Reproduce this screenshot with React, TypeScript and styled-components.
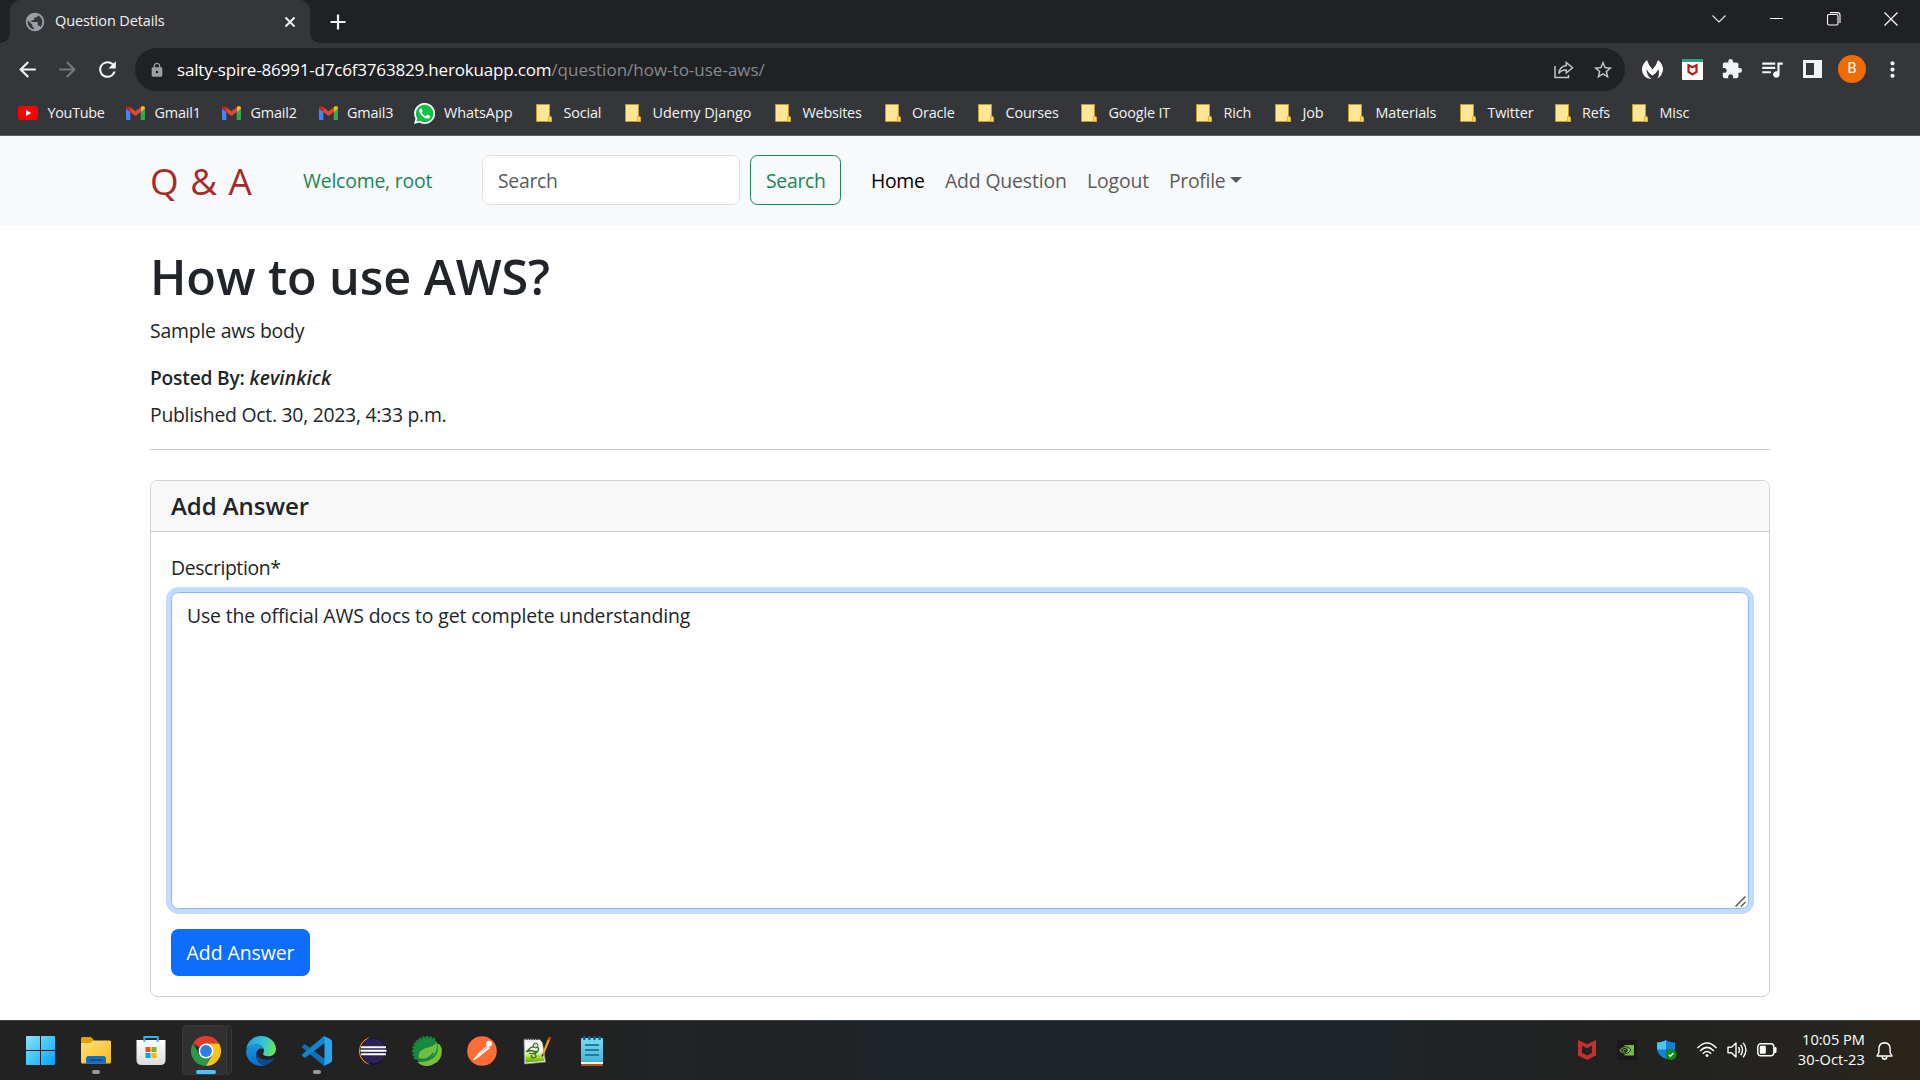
import React from "react";
import styled, { createGlobalStyle, css } from "styled-components";
import {
  MdArrowBack,
  MdArrowForward,
  MdExtension,
  MdLock,
  MdMoreVert,
  MdPublic,
  MdQueueMusic,
  MdRefresh,
  MdStarBorder,
} from "react-icons/md";

const Global = createGlobalStyle`
  *, *::before, *::after { box-sizing: border-box; }
  body {
    margin: 0;
    background: #fff;
    color: #212529;
    font-family: "Open Sans", "Noto Sans", sans-serif;
    font-size: 19.4px;
    line-height: 30px;
    overflow: hidden;
  }
  h1, h5, h6, p { margin: 0; }
  svg { display: block; flex: none; }
`;

const Screen = styled.div`
  width: 1920px;
  height: 1080px;
  display: flex;
  flex-direction: column;
  overflow: hidden;
`;

/* ---------- browser chrome ---------- */

const TabStrip = styled.div`
  height: 43px;
  background: #202124;
  display: flex;
  padding-left: 10px;
  flex: none;
`;

const Tab = styled.div`
  position: relative;
  width: 300px;
  height: 43px;
  padding: 0 14px 0 14px;
  display: flex;
  align-items: center;
  gap: 9px;
  background: #35363a;
  border-radius: 10px 10px 0 0;
  color: #9aa0a6;
  &::before,
  &::after {
    content: "";
    position: absolute;
    bottom: 0;
    width: 10px;
    height: 10px;
  }
  &::before {
    left: -10px;
    background: radial-gradient(circle at 0 0, transparent 9.5px, #35363a 10px);
  }
  &::after {
    right: -10px;
    background: radial-gradient(circle at 100% 0, transparent 9.5px, #35363a 10px);
  }
`;

const TabTitle = styled.span`
  flex: 1;
  color: #f1f3f4;
  font-size: 14.5px;
  letter-spacing: -0.12px;
  line-height: 20px;
  margin-top: -1px;
`;

const NewTab = styled.div`
  width: 55px;
  display: grid;
  place-items: center;
`;

const WindowControls = styled.div`
  margin-left: auto;
  display: flex;
  height: 37px;
`;

const ControlSlot = styled.div`
  width: 57.4px;
  display: grid;
  place-items: center;
`;

const Toolbar = styled.div`
  height: 50px;
  background: #35363a;
  display: flex;
  align-items: center;
  padding: 5px 7px 2px 7px;
  flex: none;
`;

const ToolSlot = styled.div<{ $dim?: boolean }>`
  width: 40px;
  display: grid;
  place-items: center;
  flex: none;
  padding-bottom: 1px;
  color: ${(p) => (p.$dim ? "#76777a" : "#f1f3f4")};
`;

const AddressBar = styled.div`
  width: 1490px;
  height: 43px;
  margin: 0 7px 0 8px;
  padding: 0 3px 0 14px;
  border-radius: 22px;
  background: #202124;
  display: flex;
  align-items: center;
  color: #9aa0a6;
`;

const Url = styled.div`
  flex: 1;
  margin-left: 12px;
  font-size: 17px;
  line-height: 24px;
  letter-spacing: -0.18px;
  color: #fff;
  white-space: nowrap;
  span {
    color: #868a8f;
    letter-spacing: 0;
  }
`;

const AddressSlot = styled.div`
  width: 39px;
  display: grid;
  place-items: center;
  color: #c3c6ca;
`;

const Avatar = styled.div`
  width: 28px;
  height: 28px;
  border-radius: 50%;
  background: #ef6c00;
  color: #fff;
  font: 14.5px/28px Roboto, sans-serif;
  text-align: center;
`;

const Bookmarks = styled.div`
  height: 43px;
  background: #35363a;
  border-bottom: 1px solid #5d5e62;
  display: flex;
  padding: 0 0 2px 18px;
  flex: none;
`;

const Bookmark = styled.div<{ $w: number; $gap: number; $ls?: number }>`
  width: ${(p) => p.$w}px;
  display: flex;
  align-items: center;
  flex: none;
  gap: ${(p) => p.$gap}px;
  font-size: 14.4px;
  letter-spacing: ${(p) => p.$ls ?? -0.15}px;
  color: #f1f3f4;
  white-space: nowrap;
`;

/* ---------- page ---------- */

const Navbar = styled.nav`
  height: 89px;
  background: #f7f9fb;
  display: flex;
  align-items: center;
  padding: 0 150px;
  flex: none;
`;

const Brand = styled.div`
  width: 153px;
  font-size: 36.8px;
  line-height: 56px;
  color: #a52a2a;
  letter-spacing: 1px;
  padding-top: 1px;
  white-space: nowrap;
`;

const Welcome = styled.span`
  width: 179px;
  color: #198754;
  letter-spacing: -0.2px;
  padding-top: 1px;
`;

const controlBox = css`
  height: 50px;
  border-radius: 7.5px;
  padding: 2px 15px 0;
  display: flex;
  align-items: center;
  letter-spacing: -0.3px;
  margin-bottom: 1px;
`;

const SearchField = styled.div`
  ${controlBox}
  width: 258px;
  margin-right: 10px;
  background: #fff;
  border: 1px solid #dee2e6;
  color: #595c5f;
`;

const SearchButton = styled.div`
  ${controlBox}
  width: 91px;
  margin-right: 30px;
  border: 1px solid #198754;
  color: #198754;
`;

const NavLink = styled.a<{ $w: number; $active?: boolean; $ls?: number }>`
  width: ${(p) => p.$w}px;
  display: flex;
  align-items: center;
  gap: 5px;
  color: ${(p) => (p.$active ? "#000" : "#5a5b5c")};
  letter-spacing: ${(p) => p.$ls ?? 0}px;
  white-space: nowrap;
  padding-top: 1px;
`;

const Caret = styled.i`
  border-top: 6px solid currentColor;
  border-left: 6px solid transparent;
  border-right: 6px solid transparent;
  margin-top: -3px;
`;

const Main = styled.main`
  flex: 1;
  padding: 21px 150px 0;
`;

const Title = styled.h1`
  font-size: 48.5px;
  line-height: 60px;
  font-weight: 600;
  letter-spacing: -0.08px;
`;

const Body = styled.p`
  margin-top: 10px;
  letter-spacing: -0.2px;
`;

const Author = styled.h6`
  margin-top: 20px;
  font-size: 19.2px;
  line-height: 24px;
  font-weight: 600;
  letter-spacing: -0.2px;
  em {
    letter-spacing: 0.12px;
  }
`;

const Published = styled.p`
  margin-top: 10px;
  letter-spacing: -0.27px;
`;

const Rule = styled.div`
  height: 1px;
  margin: 19px 0 30px;
  background: #c7c8c9;
`;

const Card = styled.section`
  height: 517px;
  border: 1px solid #d0d1d2;
  border-radius: 7.5px;
  overflow: hidden;
`;

const CardHeader = styled.h5`
  height: 51px;
  padding: 10px 20px;
  background: #f8f8f8;
  border-bottom: 1px solid #cbcccd;
  font-size: 24px;
  font-weight: 600;
  line-height: 30px;
  letter-spacing: -0.05px;
`;

const CardBody = styled.div`
  padding: 21px 20px;
`;

const Label = styled.div`
  letter-spacing: -0.4px;
`;

const AnswerBox = styled.div`
  position: relative;
  height: 317px;
  margin: 9px 0 20px;
  padding: 8px 15px;
  border: 1px solid #86b7fe;
  border-radius: 7.5px;
  box-shadow: 0 0 0 5px #c2dbfe;
  letter-spacing: -0.13px;
`;

const Grip = styled.svg`
  position: absolute;
  right: 2px;
  bottom: 1px;
`;

const Submit = styled.div`
  width: 139px;
  height: 47px;
  border-radius: 7.5px;
  background: #0d6efd;
  color: #fff;
  line-height: 47px;
  text-align: center;
  letter-spacing: -0.05px;
`;

/* ---------- taskbar ---------- */

const Taskbar = styled.footer`
  height: 60px;
  flex: none;
  display: flex;
  padding-left: 13px;
  border-top: 1px solid #3d3f40;
  background: linear-gradient(90deg, #222 0%, #222222 28%, #1e2429 50%, #1e2429 70%, #22221f 87%, #262420 95%, #2b2419 100%);
`;

const AppSlot = styled.div<{ $active?: boolean }>`
  position: relative;
  width: 55.2px;
  display: grid;
  place-items: center;
  ${(p) =>
    p.$active &&
    css`
      &::before {
        content: "";
        position: absolute;
        left: 3px;
        top: 4px;
        width: 45px;
        height: 50px;
        border-radius: 5px;
        background: #303030;
        border: 1px solid #3a3a3a;
        border-right: 0;
      }
      &::after {
        content: "";
        position: absolute;
        left: 47px;
        top: 4px;
        width: 6px;
        height: 50px;
        border-radius: 0 5px 5px 0;
        background: #2a2a2a;
        border: 1px solid #3a3a3a;
      }
    `}
  svg {
    position: relative;
  }
`;

const Indicator = styled.i<{ $active?: boolean }>`
  position: absolute;
  z-index: 1;
  bottom: 6px;
  left: 50%;
  width: ${(p) => (p.$active ? 20 : 8)}px;
  height: 4px;
  border-radius: 2px;
  transform: translateX(-50%);
  background: ${(p) => (p.$active ? "#4cc2ff" : "#9a9a9a")};
`;

const Tray = styled.div`
  margin-left: auto;
  display: flex;
  align-items: center;
  padding-right: 27px;
`;

const TraySlot = styled.div<{ $w: number }>`
  width: ${(p) => p.$w}px;
  display: grid;
  place-items: center;
  padding-bottom: 1px;
`;

const Clock = styled.div`
  width: 84px;
  margin-right: 11px;
  text-align: right;
  color: #fff;
  font-size: 14.6px;
  line-height: 20px;
  padding-bottom: 4px;
  div + div {
    letter-spacing: 0.1px;
  }
`;

/* ---------- icons ---------- */

const YouTube = () => (
  <svg width="20" height="14" viewBox="0 0 20 14">
    <rect width="20" height="14" rx="3.6" fill="#f00" />
    <path d="M8 4l5.2 3L8 10z" fill="#fff" />
  </svg>
);

const Gmail = () => (
  <svg width="19" height="14" viewBox="0 0 19 14">
    <path d="M0 2.5V12.7Q0 14 1.3 14H4.3V5.6z" fill="#4285f4" />
    <path d="M19 2.5V12.7Q19 14 17.7 14H14.7V5.6z" fill="#34a853" />
    <path d="M14.7 1.2V6L19 2.8V2.2Q19 0 17 0Q16 0 14.7 1.2z" fill="#fbbc04" />
    <path d="M4.3 1.2V6L0 2.8V2.2Q0 0 2 0Q3 0 4.3 1.2z" fill="#c5221f" />
    <path d="M4.3 1.2L9.5 5.2L14.7 1.2V6L9.5 10L4.3 6z" fill="#ea4335" />
  </svg>
);

const WhatsApp = () => (
  <svg width="21" height="21" viewBox="0 0 24 24">
    <path d="M12 0A12 12 0 0 0 1.7 18L0 24l6.2-1.6A12 12 0 1 0 12 0z" fill="#fff" />
    <path d="M12 2.1a9.9 9.9 0 0 0-8.3 15.2l-1 3.9 4-1A9.9 9.9 0 1 0 12 2.1z" fill="#12c143" />
    <path d="M8.6 6.7c-.3-.6-.6-.6-1.2-.5-.7.2-1.6 1.2-1.5 2.7.1 2.9 4.7 8.8 9.7 8.9 1.7 0 2.8-1.1 2.9-2.6 0-.5-.1-.6-2.9-1.9-.4-.1-.6 0-.8.3l-1 1.2c-.2.2-.4.2-.7.1-1.9-.8-3.2-2-4.2-3.7-.1-.3-.1-.4.8-1.5.2-.3.2-.5.1-.8z" fill="#fff" />
  </svg>
);

const Folder = () => (
  <svg width="16" height="18" viewBox="0 0 16 18">
    <path d="M.5.5H13.5V13.5L15.5 14V17.5H.5z" fill="#ffe694" stroke="#c49b2a" strokeWidth="1" />
    <path d="M12.5 12.5H14.5Q15.5 12.5 15.5 13.5V17.5H12.5z" fill="#ffd75e" stroke="#d9a62c" strokeWidth=".8" />
  </svg>
);

const Malwarebytes = () => (
  <svg width="21" height="19" viewBox="0 0 21 19">
    <path d="M5 0Q6.500 5.500 10.500 9.500Q14.500 5.500 16 0Q21 4 21 9.500Q20.800 15 15.500 18.500Q17.800 14 16.500 9.200Q14.500 13 10.500 15.500Q6.500 13 4.500 9.200Q4.300 15 9.500 19Q3 18.500 .8 13.500Q-2 6 5 0z" fill="#fff" />
  </svg>
);

const McAfeeExtension = () => (
  <svg width="21" height="21" viewBox="0 0 21 21">
    <rect width="21" height="21" rx="1" fill="#fff" />
    <path d="M0 1Q0 0 1 0H20Q21 0 21 1V3H0z" fill="#2d9f86" />
    <path d="M6.500 6.200L10.500 8.300L14.500 6.200V13L10.500 15.500L6.500 13z" fill="none" stroke="#c01818" strokeWidth="2.2" />
  </svg>
);

const SidePanel = () => (
  <svg width="19" height="18" viewBox="0 0 19 18">
    <path fillRule="evenodd" d="M0 0H19V18H0zM3 3H11V15H3z" fill="#f1f3f4" />
  </svg>
);

const Share = () => (
  <svg width="20" height="18" viewBox="0 0 20 18" fill="none" stroke="#c3c6ca" strokeWidth="1.5">
    <path d="M1 5V16.500H14.500V14" />
    <path d="M12.300 1.500L18.500 6.800L12.300 12V9Q7.500 8.500 4.800 12.500Q5.500 5.500 12.300 4.600z" />
  </svg>
);

const McAfee = () => (
  <svg width="18" height="20" viewBox="0 0 18 20">
    <path fillRule="evenodd" d="M0 0L9 4.300L18 0V15.500L9 20L0 15.500zM4 5.800V13L9 15.600L14 13V5.800L9 8.300z" fill="#c52f2d" />
  </svg>
);

const Nvidia = () => (
  <svg width="20" height="20" viewBox="0 0 20 20">
    <rect width="20" height="20" fill="#191919" />
    <path d="M7.500 5H17V15.500H7.500z" fill="#76b93c" />
    <path d="M2 10.500Q5 6 9 6.500Q12 7 14 10Q11 14.200 7.500 14Q4 13.500 2 10.500z" fill="#76b93c" stroke="#191919" strokeWidth=".8" />
    <path d="M4.500 10.500Q7 7.500 9.500 9Q11 10.500 8.500 12.200Q6 12.500 4.500 10.500zM7 10.300L9 10.800" fill="none" stroke="#191919" strokeWidth="1.2" />
  </svg>
);

const Shield = () => (
  <svg width="20" height="20" viewBox="0 0 20 20">
    <path d="M9 0Q12 2.300 18 2.600V9Q17.500 15.500 9 19Q.5 15.500 0 9V2.600Q6 2.300 9 0z" fill="#1580d8" />
    <path d="M9 0V9.500H0V2.600Q6 2.300 9 0z" fill="#4cc3f3" />
    <path d="M9 9.500H18Q17.500 15.500 9 19z" fill="#0b57a8" />
    <circle cx="14" cy="14.5" r="5.6" fill="#0f8a14" />
    <path d="M11.600 14.600L13.300 16.300L16.500 13" fill="none" stroke="#fff" strokeWidth="1.3" />
  </svg>
);

const Wifi = () => (
  <svg width="20" height="16" viewBox="0 0 20 16" fill="none" stroke="#fff" strokeWidth="1.5" strokeLinecap="round">
    <path d="M1 5.600Q10-3.600 19 5.600M3.600 8.500Q10 2.200 16.400 8.500M6.300 11.200Q10 7.800 13.700 11.200" />
    <circle cx="10" cy="13.6" r="1.4" fill="#fff" stroke="none" />
  </svg>
);

const Volume = () => (
  <svg width="20" height="16" viewBox="0 0 20 16" fill="none" stroke="#fff" strokeWidth="1.4" strokeLinecap="round" strokeLinejoin="round">
    <path d="M1 5.300H4.500L9 1V15L4.500 10.700H1z" />
    <path d="M11.700 5.500Q13.300 8 11.700 10.500M14 3.300Q17 8 14 12.700M16.400 1.200Q21.500 8 16.400 14.800" />
  </svg>
);

const Battery = () => (
  <svg width="20" height="14" viewBox="0 0 20 14" fill="none" stroke="#fff" strokeWidth="1.4">
    <rect x=".8" y=".8" width="16" height="12" rx="3" />
    <rect x="2.8" y="2.8" width="6" height="8" rx="1" fill="#fff" stroke="none" />
    <path d="M18.300 5.200V8.700" strokeWidth="2.4" strokeLinecap="round" />
  </svg>
);

const Bell = () => (
  <svg width="17" height="18" viewBox="0 0 17 18" fill="none" stroke="#fff" strokeWidth="1.4" strokeLinejoin="round">
    <path d="M8.500 .8Q3 1 2.900 6.800V10.500L1 14H16L14.100 10.500V6.800Q14 1 8.500 .8z" />
    <path d="M6 14.500Q6.500 17.200 8.500 17.200Q10.500 17.200 11 14.500" />
  </svg>
);

const Start = () => (
  <svg width="29" height="29" viewBox="0 0 29 29">
    <defs>
      <linearGradient id="start" x1="0" y1="0" x2="1" y2="1" gradientUnits="objectBoundingBox">
        <stop offset="0" stopColor="#8be0ff" />
        <stop offset=".55" stopColor="#3cc4fb" />
        <stop offset="1" stopColor="#0a9bf5" />
      </linearGradient>
    </defs>
    <path d="M1 0H14V14H0V1Q0 0 1 0zM15 0H28Q29 0 29 1V14H15zM0 15H14V29H1Q0 29 0 28zM15 15H29V28Q29 29 28 29H15z" fill="url(#start)" />
  </svg>
);

const Explorer = () => (
  <svg width="30" height="27" viewBox="0 0 30 27">
    <defs>
      <linearGradient id="exp" x1="0" y1="0" x2="1" y2="1">
        <stop offset="0" stopColor="#ffe07a" />
        <stop offset="1" stopColor="#fdb91c" />
      </linearGradient>
    </defs>
    <path d="M0 1.500Q0 0 1.500 0H9Q10 0 11 1L13 3.500V9H0z" fill="#e3a008" />
    <path d="M0 6H9.500L12.500 3.500H28.500Q30 3.500 30 5V25Q30 26.500 28.500 26.500H1.500Q0 26.500 0 25z" fill="url(#exp)" />
    <path d="M5 26.500V21.500Q5 19 7.500 19H22.500Q25 19 25 21.500V26.500z" fill="#0f6fc6" />
    <path d="M8.500 23H21.500" stroke="#06437e" strokeWidth="1.2" />
  </svg>
);

const Store = () => (
  <svg width="30" height="29" viewBox="0 0 30 29">
    <defs>
      <linearGradient id="store" x1="0" y1="0" x2="0" y2="1">
        <stop offset="0" stopColor="#fff" />
        <stop offset="1" stopColor="#dcdcdc" />
      </linearGradient>
    </defs>
    <path d="M.5 4H29.500V24Q29.500 29 24.500 29H5.500Q.5 29 .5 24z" fill="url(#store)" />
    <path d="M8.300 6V1H21.700V6" fill="none" stroke="#2bb5ea" strokeWidth="1.9" />
    <rect x="9.5" y="11" width="5" height="5" fill="#f25022" />
    <rect x="15.5" y="11" width="5" height="5" fill="#7fba00" />
    <rect x="9.5" y="17" width="5" height="5" fill="#00a4ef" />
    <rect x="15.5" y="17" width="5" height="5" fill="#ffb900" />
  </svg>
);

const Chrome = () => (
  <svg width="30" height="30" viewBox="0 0 30 30">
    <path d="M15 15L2 7.500A15 15 0 0 1 28 7.500H15z" fill="#e33b2e" />
    <path d="M2 7.500A15 15 0 0 0 15 30L21.500 18.750L15 15L8.500 18.750z" fill="#2a9a47" />
    <path d="M28 7.500H15V15L21.500 18.750L15 30A15 15 0 0 0 28 7.500z" fill="#fcc31e" />
    <circle cx="15" cy="15" r="7.4" fill="#fff" />
    <circle cx="15" cy="15" r="5.9" fill="#2f7de9" />
  </svg>
);

const Edge = () => (
  <svg width="30" height="30" viewBox="0 0 30 30">
    <defs>
      <linearGradient id="edgeTop" x1="0" y1=".3" x2="1" y2=".5">
        <stop offset="0" stopColor="#1f9fe0" />
        <stop offset=".55" stopColor="#33c5d8" />
        <stop offset="1" stopColor="#6be356" />
      </linearGradient>
      <linearGradient id="edgeLow" x1="0" y1="0" x2="0" y2="1">
        <stop offset="0" stopColor="#1b97e0" />
        <stop offset="1" stopColor="#0b6cc8" />
      </linearGradient>
    </defs>
    <path d="M.3 13.500C1 5.500 7.500 0 15 0C24 0 30 6.500 30 13C30 17.500 26.500 20.300 22.500 20.300C19 20.300 17 19 17 18C17 17.200 18 16.500 18 14.500C18 11 14.500 8.500 10.500 8.500C5 8.500 1.200 11.500 .3 13.500z" fill="url(#edgeTop)" />
    <path d="M.1 16C0 11.500 5 8.500 10.500 8.500C14.500 8.500 17.500 11 18 13.500C16 11.500 10.500 12.500 10 18.500C9.700 24 14 28.800 19.500 29.300C10 32 .5 25.500 .1 16z" fill="url(#edgeLow)" />
    <path d="M10.300 16C8.500 23 14 28.800 19.500 29.200C23.500 28 26.500 25.500 28 22.800C28.200 22.300 27.700 22 27.200 22.300C20.500 25.500 11.500 23.500 10.300 16z" fill="#114a8b" />
  </svg>
);

const VsCode = () => (
  <svg width="30" height="30" viewBox="0 0 30 30">
    <path d="M0 10.500L2 8.600Q3 8 3.900 8.700L28 27L22 30L.3 11.800z" fill="#0e6fb4" />
    <path d="M0 19.500L2 21.400Q3 22 3.900 21.300L28 3L22 0L.3 18.200z" fill="#1284cf" />
    <path d="M21.500 .2L28.500 3.300Q30 4 30 5.500V24.500Q30 26 28.500 26.700L21.500 29.800Q22.500 29 22.500 27.500V2.500Q22.500 1 21.500 .2z" fill="#27a5f0" />
  </svg>
);

const Eclipse = () => (
  <svg width="30" height="28" viewBox="0 0 30 28">
    <path d="M13 .3A14 14 0 0 0 13 27.700A17 17 0 0 1 13 .3z" fill="#f7941e" />
    <circle cx="16.5" cy="14" r="13" fill="#2c2255" stroke="#14102c" />
    <path d="M4 10.300H29M3.500 13.800H29.500M4 17.300H29" stroke="#fff" strokeWidth="1.9" />
  </svg>
);

const teeth = Array.from({ length: 24 }, (_, i) => i * 15);

const Spring = () => (
  <svg width="30" height="30" viewBox="0 0 30 30">
    {teeth.filter((a) => a > 230 || a < 45).map((a) => (
      <rect key={a} x="13.7" y="0" width="2.6" height="4" fill="#178a3c" transform={`rotate(${a} 15 15)`} />
    ))}
    <circle cx="15" cy="15" r="13.3" fill="#178a3c" />
    <path d="M28 9Q30 12 29.800 15A14.800 14.800 0 0 1 5 26Q17 26.500 22.500 21Q27 17 25.500 8Q27 7.500 28 9z" fill="#78be3c" />
    <path d="M24.500 6.500Q22 10.500 14 12Q6 14 6.500 22Q14 24 20 20.500Q26.500 16 24.500 6.500z" fill="#6cbf45" />
    <path d="M5.500 23.500Q16 25.500 21.500 17" fill="none" stroke="#1b7f35" strokeWidth="1.4" />
  </svg>
);

const Postman = () => (
  <svg width="30" height="30" viewBox="0 0 30 30">
    <circle cx="15" cy="15" r="14.8" fill="#ff6c37" />
    <circle cx="22" cy="7.7" r="2.9" fill="#fff" />
    <path d="M20 10.500L12 17.500L13.200 19L22 12z" fill="#fff" stroke="#fff" strokeWidth="1.3" />
    <path d="M12.500 17.500L6.500 24M13.200 19L9 22.500" fill="none" stroke="#fff" strokeWidth="1.5" />
    <path d="M14 16.500L20.500 11" stroke="#ff6c37" strokeWidth=".7" />
  </svg>
);

const NotepadPlus = () => (
  <svg width="28" height="28" viewBox="0 0 28 28">
    <defs>
      <linearGradient id="npp" x1="0" y1="0" x2="0" y2="1">
        <stop offset="0" stopColor="#fff" />
        <stop offset=".45" stopColor="#f3f6e0" />
        <stop offset=".75" stopColor="#9fd61c" />
        <stop offset="1" stopColor="#5aa515" />
      </linearGradient>
    </defs>
    <path d="M1 2L17 2.500L19.500 6L22.500 25L1.500 27z" fill="#f3f3f3" stroke="#8b8b8b" strokeWidth=".7" />
    <path d="M2 6H18.500L21.300 24L2.500 25.500z" fill="url(#npp)" />
    <path d="M1.500 2H17" stroke="#333" strokeWidth="2" strokeDasharray="1 1.3" />
    <path d="M4 15Q7 9 12 10Q17 10 15 14Q12 18 6 16M10 16Q15 19 12 20.500Q8 22 8.500 18M3 14.500L8 13.500L14 15" fill="none" stroke="#2b6b1c" strokeWidth="1.3" />
    <circle cx="12.5" cy="8.5" r="2.4" fill="#cfe6a0" stroke="#3a4a3a" strokeWidth=".9" />
    <path d="M26.500 1L19.500 18.500" stroke="#e9a21c" strokeWidth="2.2" />
    <path d="M27.300 .2L26 3" stroke="#c23b2b" strokeWidth="2.4" />
    <path d="M20 17.200L19 19.600" stroke="#333" strokeWidth="1.4" />
  </svg>
);

const Notepad = () => (
  <svg width="22" height="30" viewBox="0 0 22 30">
    <defs>
      <linearGradient id="note" x1="0" y1="0" x2="0" y2="1">
        <stop offset="0" stopColor="#7bdcf5" />
        <stop offset="1" stopColor="#45b3d6" />
      </linearGradient>
    </defs>
    <rect y="26" width="22" height="4" rx="1" fill="#b9540f" />
    <path d="M0 25H22V28H0z" fill="#f1f1f1" />
    <path d="M0 3Q0 2 1 2H21Q22 2 22 3V26H0z" fill="url(#note)" />
    <path d="M3.300 1.200V3M8.400 1.200V3M13.500 1.200V3M18.600 1.200V3" stroke="#0c6687" strokeWidth="2.6" strokeLinecap="round" />
    <path d="M4 9H18M4 14H18M4 19H18" stroke="#0c6687" strokeWidth="1.7" />
  </svg>
);

const folders: { name: string; w: number; gap: number; ls?: number }[] = [
  { name: "Social", w: 89, gap: 11.5 },
  { name: "Udemy Django", w: 150, gap: 11.5, ls: 0 },
  { name: "Websites", w: 109.5, gap: 11.5, ls: -0.2 },
  { name: "Oracle", w: 93.5, gap: 11.5 },
  { name: "Courses", w: 103, gap: 11.5 },
  { name: "Google IT", w: 115, gap: 11.5 },
  { name: "Rich", w: 79, gap: 11.5 },
  { name: "Job", w: 72.5, gap: 11.5 },
  { name: "Materials", w: 112, gap: 12 },
  { name: "Twitter", w: 95, gap: 12 },
  { name: "Refs", w: 77.5, gap: 11.5 },
  { name: "Misc", w: 80, gap: 11.5 },
];

const apps: { id: string; icon: React.ReactNode; running?: boolean; active?: boolean }[] = [
  { id: "start", icon: <Start /> },
  { id: "explorer", icon: <Explorer />, running: true },
  { id: "store", icon: <Store /> },
  { id: "chrome", icon: <Chrome />, running: true, active: true },
  { id: "edge", icon: <Edge /> },
  { id: "vscode", icon: <VsCode />, running: true },
  { id: "eclipse", icon: <Eclipse /> },
  { id: "spring", icon: <Spring /> },
  { id: "postman", icon: <Postman /> },
  { id: "npp", icon: <NotepadPlus /> },
  { id: "notepad", icon: <Notepad /> },
];

const BrowserChrome = () => (
  <>
    <TabStrip>
      <Tab>
        <MdPublic size={22} />
        <TabTitle>Question Details</TabTitle>
        <svg width="12" height="12" viewBox="0 0 12 12" stroke="#f1f3f4" strokeWidth="1.9">
          <path d="M1.500 1.500L10.500 10.500M10.500 1.500L1.500 10.500" />
        </svg>
      </Tab>
      <NewTab>
        <svg width="16" height="16" viewBox="0 0 16 16" stroke="#f1f3f4" strokeWidth="2.2">
          <path d="M8 .5V15.500M.5 8H15.500" />
        </svg>
      </NewTab>
      <WindowControls>
        <ControlSlot>
          <svg width="14" height="8" viewBox="0 0 14 8" fill="none" stroke="#e8eaed" strokeWidth="1.1">
            <path d="M.5 .5L7 7L13.500 .5" />
          </svg>
        </ControlSlot>
        <ControlSlot>
          <svg width="13" height="1" viewBox="0 0 13 1">
            <rect width="13" height="1" fill="#fff" />
          </svg>
        </ControlSlot>
        <ControlSlot>
          <svg width="14" height="14" viewBox="0 0 14 14" fill="none" stroke="#fff" strokeWidth="1.1">
            <rect x=".5" y="2.5" width="10.5" height="10.5" rx="1.5" />
            <path d="M3 .6H10.500Q13 .6 13 3V11" />
          </svg>
        </ControlSlot>
        <ControlSlot>
          <svg width="14" height="14" viewBox="0 0 14 14" stroke="#fff" strokeWidth="1.2">
            <path d="M.5 .5L13.500 13.500M13.500 .5L.5 13.500" />
          </svg>
        </ControlSlot>
      </WindowControls>
    </TabStrip>
    <Toolbar>
      <ToolSlot><MdArrowBack size={25} /></ToolSlot>
      <ToolSlot $dim><MdArrowForward size={25} /></ToolSlot>
      <ToolSlot><MdRefresh size={25} /></ToolSlot>
      <AddressBar>
        <MdLock size={16} />
        <Url>
          salty-spire-86991-d7c6f3763829.herokuapp.com<span>/question/how-to-use-aws/</span>
        </Url>
        <AddressSlot><Share /></AddressSlot>
        <AddressSlot><MdStarBorder size={22} /></AddressSlot>
      </AddressBar>
      <ToolSlot><Malwarebytes /></ToolSlot>
      <ToolSlot><McAfeeExtension /></ToolSlot>
      <ToolSlot><MdExtension size={22} /></ToolSlot>
      <ToolSlot><MdQueueMusic size={26} /></ToolSlot>
      <ToolSlot><SidePanel /></ToolSlot>
      <ToolSlot><Avatar>B</Avatar></ToolSlot>
      <ToolSlot><MdMoreVert size={25} /></ToolSlot>
    </Toolbar>
    <Bookmarks>
      <Bookmark $w={108} $gap={9.5} $ls={-0.3}><YouTube />YouTube</Bookmark>
      <Bookmark $w={96} $gap={9.5}><Gmail />Gmail1</Bookmark>
      <Bookmark $w={96.5} $gap={9.5}><Gmail />Gmail2</Bookmark>
      <Bookmark $w={95} $gap={9.5}><Gmail />Gmail3</Bookmark>
      <Bookmark $w={122.5} $gap={9.5} $ls={-0.05}><WhatsApp />WhatsApp</Bookmark>
      {folders.map((f) => (
        <Bookmark key={f.name} $w={f.w} $gap={f.gap} $ls={f.ls}><Folder />{f.name}</Bookmark>
      ))}
    </Bookmarks>
  </>
);

export default function App() {
  return (
    <Screen>
      <Global />
      <BrowserChrome />
      <Navbar>
        <Brand>Q &amp; A</Brand>
        <Welcome>Welcome, root</Welcome>
        <SearchField>Search</SearchField>
        <SearchButton>Search</SearchButton>
        <NavLink $w={74} $active $ls={-0.3}>Home</NavLink>
        <NavLink $w={142} $ls={-0.15}>Add Question</NavLink>
        <NavLink $w={82} $ls={-0.1}>Logout</NavLink>
        <NavLink $w={80} $ls={-0.3}>Profile<Caret /></NavLink>
      </Navbar>
      <Main>
        <Title>How to use AWS?</Title>
        <Body>Sample aws body</Body>
        <Author>Posted By: <em>kevinkick</em></Author>
        <Published>Published Oct. 30, 2023, 4:33 p.m.</Published>
        <Rule />
        <Card>
          <CardHeader>Add Answer</CardHeader>
          <CardBody>
            <Label>Description*</Label>
            <AnswerBox>
              Use the official AWS docs to get complete understanding
              <Grip width="11" height="11" viewBox="0 0 11 11" stroke="#555" strokeWidth="1.5">
                <path d="M.5 10.500L10.500 .5M6 10.500L10.500 6" />
              </Grip>
            </AnswerBox>
            <Submit>Add Answer</Submit>
          </CardBody>
        </Card>
      </Main>
      <Taskbar>
        {apps.map((a) => (
          <AppSlot key={a.id} $active={a.active}>
            {a.icon}
            {a.running && <Indicator $active={a.active} />}
          </AppSlot>
        ))}
        <Tray>
          <TraySlot $w={49}><McAfee /></TraySlot>
          <TraySlot $w={31}><Nvidia /></TraySlot>
          <TraySlot $w={50}><Shield /></TraySlot>
          <TraySlot $w={30}><Wifi /></TraySlot>
          <TraySlot $w={30}><Volume /></TraySlot>
          <TraySlot $w={29}><Battery /></TraySlot>
          <Clock>
            <div>10:05 PM</div>
            <div>30-Oct-23</div>
          </Clock>
          <Bell />
        </Tray>
      </Taskbar>
    </Screen>
  );
}
